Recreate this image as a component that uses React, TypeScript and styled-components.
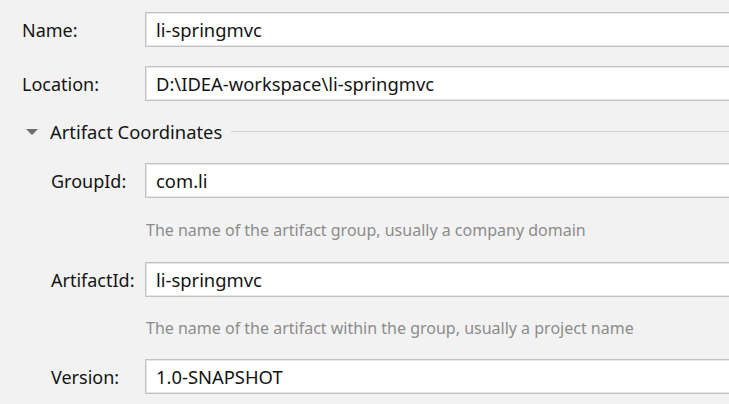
import styled, { createGlobalStyle } from "styled-components";

const Global = createGlobalStyle`
  html, body {
    margin: 0;
    padding: 0;
    background: #f2f2f2;
    overflow: hidden;
  }
  body {
    font-family: "Noto Sans", "Open Sans", sans-serif;
    color: #141414;
  }
`;

const Page = styled.div`
  width: 729px;
  height: 404px;
  padding-top: 12px;
  box-sizing: border-box;
  overflow: hidden;
`;

const Row = styled.div<{ $indent?: boolean }>`
  display: grid;
  grid-template-columns: ${(p) => (p.$indent ? "51px 94px" : "22px 123px")} 1fr;
  align-items: center;
  height: 35px;
`;

const Label = styled.label`
  grid-column: 2;
  font-size: 18px;
`;

const Field = styled.div`
  grid-column: 3;
  height: 35px;
  box-sizing: border-box;
  margin-right: -10px;
  background: #fff;
  border: 1px solid #c3c3c3;
  box-shadow: inset 0 0 0 1px #e6e6e6;
  padding-left: 10px;
  display: flex;
  align-items: center;
  font-size: 18.4px;
`;

const Gap = styled.div<{ $h: number }>`
  height: ${(p) => p.$h}px;
`;

const Hint = styled.div<{ $h: number }>`
  padding-left: 146px;
  height: ${(p) => p.$h}px;
  display: flex;
  align-items: center;
  font-size: 16px;
  color: #8c8c8c;
`;

const Section = styled.div`
  display: flex;
  align-items: center;
  height: 35px;
  padding-left: 26px;
  margin: 13px 0 14px;
`;

const Arrow = styled.span`
  width: 0;
  height: 0;
  border-left: 6.5px solid transparent;
  border-right: 6.5px solid transparent;
  border-top: 6px solid #6e6e6e;
  margin-right: 12px;
`;

const SectionTitle = styled.span`
  font-size: 18.4px;
`;

const Rule = styled.span`
  flex: 1;
  height: 1px;
  background: #d4d4d4;
  margin-left: 9px;
`;

export default function App() {
  return (
    <Page>
      <Global />
      <Row>
        <Label>Name:</Label>
        <Field>li-springmvc</Field>
      </Row>
      <Gap $h={19} />
      <Row>
        <Label>Location:</Label>
        <Field>D:\IDEA-workspace\li-springmvc</Field>
      </Row>
      <Section>
        <Arrow />
        <SectionTitle>Artifact Coordinates</SectionTitle>
        <Rule />
      </Section>
      <Row $indent>
        <Label>GroupId:</Label>
        <Field>com.li</Field>
      </Row>
      <Hint $h={64}>The name of the artifact group, usually a company domain</Hint>
      <Row $indent>
        <Label>ArtifactId:</Label>
        <Field>li-springmvc</Field>
      </Row>
      <Hint $h={62}>The name of the artifact within the group, usually a project name</Hint>
      <Row $indent>
        <Label>Version:</Label>
        <Field>1.0-SNAPSHOT</Field>
      </Row>
    </Page>
  );
}
